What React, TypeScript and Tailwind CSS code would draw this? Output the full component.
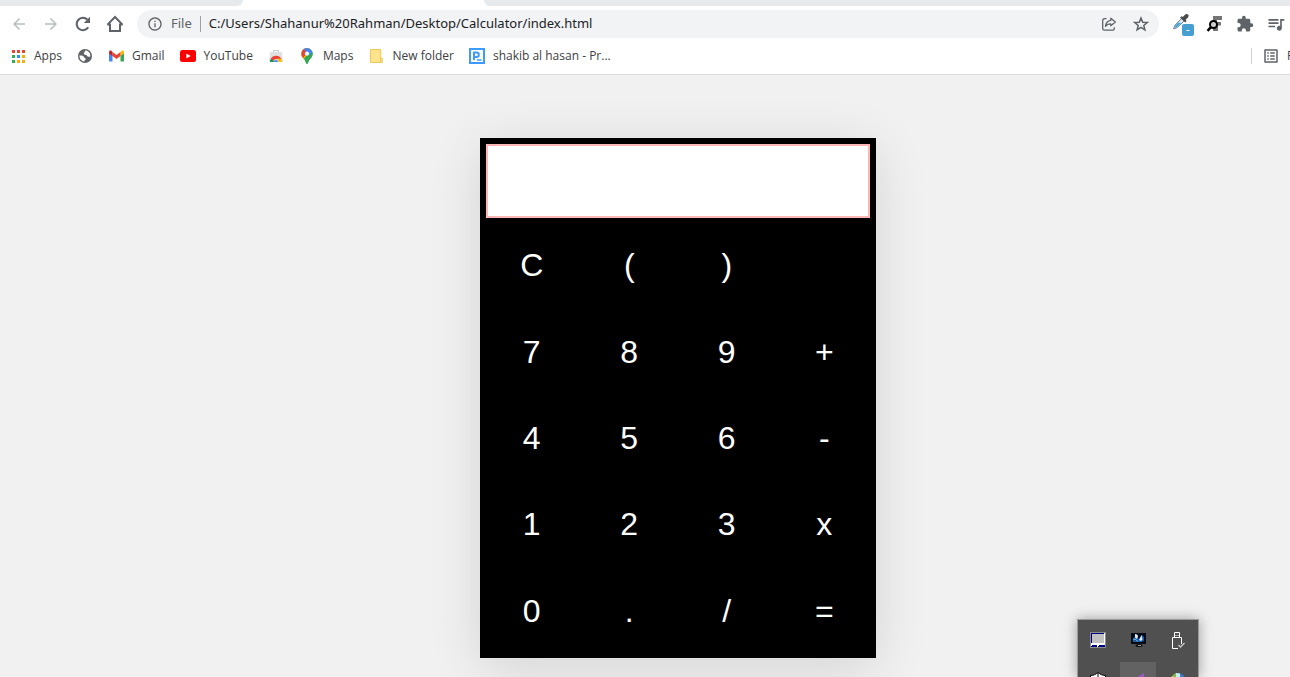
import { useState } from "react";
import type { ReactNode } from "react";
import {
  MdArrowBack,
  MdArrowForward,
  MdExtension,
  MdInfoOutline,
  MdOutlineListAlt,
  MdQueueMusic,
} from "react-icons/md";

const KEYS = [
  "C", "(", ")", "",
  "7", "8", "9", "+",
  "4", "5", "6", "-",
  "1", "2", "3", "x",
  "0", ".", "/", "=",
];

/* Recursive descent over + - x / and brackets. */
function evaluate(source: string): string {
  let pos = 0;
  const factor = (): number => {
    if (source[pos] === "-") {
      pos++;
      return -factor();
    }
    if (source[pos] === "(") {
      pos++;
      const inner = sum();
      pos++;
      return inner;
    }
    const start = pos;
    while (/[\d.]/.test(source[pos] ?? "")) pos++;
    return parseFloat(source.slice(start, pos));
  };
  const product = (): number => {
    let value = factor();
    while (source[pos] === "x" || source[pos] === "/") {
      value = source[pos++] === "x" ? value * factor() : value / factor();
    }
    return value;
  };
  const sum = (): number => {
    let value = product();
    while (source[pos] === "+" || source[pos] === "-") {
      value = source[pos++] === "+" ? value + product() : value - product();
    }
    return value;
  };
  const result = sum();
  return Number.isNaN(result) ? "Error" : String(result);
}

function ReloadIcon() {
  return (
    <svg viewBox="0 0 18 18" className="size-[18px]">
      <path d="M14.200 12.200A6.200 6.200 0 1 1 13.300 4.600" fill="none" stroke="#5f6368" strokeWidth="2.100" />
      <path d="M16 1.800V8H9.800Z" fill="#5f6368" />
    </svg>
  );
}

function HomeIcon() {
  return (
    <svg viewBox="0 0 18 18" className="size-[18px]" fill="none" stroke="#5f6368" strokeWidth="2">
      <path d="M1.500 9.600 9 2l7.500 7.600M4 8.500V16h10V8.500M1.200 9.500H4M14 9.500h2.800" />
    </svg>
  );
}

function ShareIcon() {
  return (
    <svg viewBox="0 0 16 16" className="size-4" fill="none" stroke="#5f6368" strokeWidth="1.300" strokeLinejoin="round">
      <path d="M5.500 2.700H3.300a1.600 1.600 0 0 0-1.600 1.600v8.200a1.600 1.600 0 0 0 1.600 1.600h8.400a1.600 1.600 0 0 0 1.600-1.600v-1.300" />
      <path d="M9.800 2.200 14.400 6 9.800 9.800V7.900c-2.500 0-4.200.7-5.300 2.500.3-3.200 2.100-5.600 5.300-6.100V2.200Z" />
    </svg>
  );
}

function StarIcon() {
  return (
    <svg viewBox="0 0 16 16" className="size-4" fill="none" stroke="#5f6368" strokeWidth="1.500">
      <path d="m8 2 1.700 4.200 4.500.3-3.400 2.900 1.100 4.400L8 11.400l-3.900 2.400 1.100-4.400-3.400-2.900 4.500-.3Z" />
    </svg>
  );
}

function GlobeIcon() {
  return (
    <svg viewBox="0 0 16 16" className="size-4 shrink-0">
      <circle cx="8" cy="8" r="7" fill="#5f6368" />
      <path d="M9.500 2.600c-1.600 0-2 .7-1.700 1.600-1.200.3-1.200 1.300-.6 2 .9.900 2.600.3 3.100 1.700.3 1 1.600 1 3 .6.300-2.600-1.200-5-3.800-5.900Z" fill="#fff" />
      <path d="M2.500 7.500c2.300-.2 4.400.2 4.600 1.800.1 1 1.600.4 1.600 1.700 0 1-1.200 1-1.300 2.400C4.600 13.200 2.300 11 2.500 7.500Z" fill="#fff" />
    </svg>
  );
}

function PipetteIcon() {
  return (
    <svg viewBox="0 0 22 24" className="h-6 w-[22px]">
      <path d="m1.500 16.800 1.300-3.500 7-7 2.500 2.500-7.200 6.900Z" fill="#dbe9f1" stroke="#7d868d" strokeWidth="1" />
      <path d="m2.500 15.800 1-2.300 2.600-2.700h3.200L5 15Z" fill="#35a7e0" />
      <path d="m8 5.500 1.500-1.300 1.200.8 2-2c1.200-1.200 2.600-1.300 3.400-.5s.7 2.100-.4 3.300l-2 2 .8 1.300-1.300 1.400Z" fill="#4a4a4c" />
      <rect x="10" y="12" width="12" height="12" rx="2" fill="#469fcf" />
      <path d="M14.500 18.500h3" stroke="#fff" strokeWidth="1" />
    </svg>
  );
}

function FontFinderIcon() {
  return (
    <svg viewBox="0 0 18 18" className="size-[18px]">
      <path d="M7 1h9v4h-5v2h4v3.500h-3V16H7Z" fill="#757575" />
      <circle cx="7.500" cy="9.500" r="3.500" fill="#d0d0d0" stroke="#000" strokeWidth="2" />
      <path d="m5 12.200-3.500 3.600" stroke="#000" strokeWidth="2.500" />
    </svg>
  );
}

function AppsIcon() {
  const dots = [
    "#ea4335", "#ea4335", "#ea4335",
    "#34a853", "#2196f3", "#fbab09",
    "#34a853", "#fbab09", "#fbab09",
  ];
  return (
    <svg viewBox="0 0 13 13" className="size-[13px]">
      {dots.map((fill, i) => (
        <rect key={i} x={(i % 3) * 5} y={Math.floor(i / 3) * 5} width="3" height="3" fill={fill} />
      ))}
    </svg>
  );
}

function GmailIcon() {
  return (
    <svg viewBox="0 0 15 12" className="h-3 w-[15px]">
      <path d="M0 3v7.500c0 .6.500 1 1 1h2.500V5Z" fill="#4285f4" />
      <path d="M15 3v7.500c0 .6-.5 1-1 1h-2.500V5Z" fill="#34a853" />
      <path d="M11.500 2v4L15 3.500V2c0-1.400-1.500-2-2.500-1Z" fill="#fbbc04" />
      <path d="M3.500 6V2l4 3 4-3v4l-4 3Z" fill="#ea4335" />
      <path d="M0 2v1.500L3.500 6V2l-1-1C1.500 0 0 .6 0 2Z" fill="#c5221f" />
    </svg>
  );
}

function YouTubeIcon() {
  return (
    <svg viewBox="0 0 16 12" className="h-3 w-4">
      <rect width="16" height="12" rx="2.500" fill="#f00" />
      <path d="M6.300 3.400 10.700 6 6.300 8.600Z" fill="#fff" />
    </svg>
  );
}

function WebStoreIcon() {
  return (
    <svg viewBox="0 0 14 14" className="size-3.5">
      <path d="M4.500 3V1.500h5V3" fill="none" stroke="#c9cccf" />
      <path d="M1 3h12l1 10H0Z" fill="#dfe1e3" />
      <path d="M1 13a6 6 0 0 1 2-4.500L5 13Z" fill="#0f9d58" />
      <path d="M1.800 9.800a6 6 0 0 1 10.600.200L7 10a2.600 2.600 0 0 0-2.500 2Z" fill="#ea4335" />
      <path d="M12.300 9.800c.5 1 .7 2 .7 3.200H9.500c0-1.200-.5-2.300-1.500-3.200Z" fill="#fbbc04" />
      <path d="M5 13a2 2 0 1 1 4 0Z" fill="#4285f4" />
    </svg>
  );
}

function MapsIcon() {
  return (
    <svg viewBox="0 0 12 16" className="h-4 w-3">
      <defs>
        <clipPath id="maps-pin">
          <path d="M6 0a5.600 5.600 0 0 0-5.600 5.700c0 3 1.700 4 3.300 6.300C4.800 13.500 5 16 6 16s1.200-2.500 2.300-4c1.600-2.300 3.300-3.300 3.300-6.300A5.600 5.600 0 0 0 6 0Z" />
        </clipPath>
      </defs>
      <g clipPath="url(#maps-pin)">
        <rect width="12" height="16" fill="#34a853" />
        <path d="M0 11V7l6-7h6L2.500 11Z" fill="#fbbc04" />
        <path d="M0 0h4l2 5-4 5-2-2Z" fill="#ea4335" />
        <path d="M3 0h9v4L8.500 8 5.500 5.500Z" fill="#4285f4" />
        <path d="M12 3v13H3.500v-3.500Z" fill="#34a853" />
      </g>
      <circle cx="6" cy="5.600" r="2.100" fill="#fff" />
    </svg>
  );
}

function FolderIcon() {
  return (
    <svg viewBox="0 0 13 15" className="h-[15px] w-[13px]">
      <path d="M.5.5h10.200V9h1.500v4.500h-11.700Z" fill="#ffe38d" stroke="#efc956" />
      <path d="M10.500 9v4.500" stroke="#efc956" />
    </svg>
  );
}

function PortalIcon() {
  return (
    <svg viewBox="0 0 16 16" className="size-4">
      <rect x="1" y="1" width="14" height="14" fill="#fff" stroke="#3d9bff" strokeWidth="2" />
      <path d="M5 12V4.500h2.500a2.300 2.300 0 0 1 0 4.600H5" fill="none" stroke="#3d9bff" strokeWidth="2" />
      <path d="M8 12h4.500" stroke="#3d9bff" strokeWidth="1.500" />
    </svg>
  );
}

function Bookmark({ icon, label, title }: { icon: ReactNode; label?: string; title?: string }) {
  return (
    <a href="#" aria-label={label ?? title} className="flex shrink-0 items-center gap-2 whitespace-nowrap">
      <span className="flex w-4 justify-center">{icon}</span>
      {label}
    </a>
  );
}

function BrowserChrome() {
  return (
    <header className="border-b border-[#d9dbdd] bg-white font-['Open_Sans',sans-serif] text-xs text-[#3c4043]">
      <div className="flex h-1.5">
        <div className="w-[243px] rounded-br-md bg-[#e6eaed]" />
        <div className="w-[241px]" />
        <div className="flex-1 rounded-bl-md bg-[#e6eaed]" />
      </div>
      <div className="flex h-9 items-center pl-2.5">
        <nav className="flex items-center gap-3.5 pr-[13px]">
          <button type="button" aria-label="Back"><MdArrowBack className="size-[18px] text-[#babcbe]" /></button>
          <button type="button" aria-label="Forward"><MdArrowForward className="size-[18px] text-[#babcbe]" /></button>
          <button type="button" aria-label="Reload"><ReloadIcon /></button>
          <button type="button" aria-label="Home"><HomeIcon /></button>
        </nav>
        <div className="flex h-7 flex-1 items-center rounded-full bg-[#f1f3f4] px-2.5 font-['Noto_Sans',sans-serif] text-[13px]">
          <MdInfoOutline className="size-4 text-[#5f6368]" />
          <span className="ml-2 text-[#5f6368]">File</span>
          <span className="mx-2 h-4 w-px bg-[#9aa0a6]" />
          <input
            aria-label="Address"
            readOnly
            value="C:/Users/Shahanur%20Rahman/Desktop/Calculator/index.html"
            className="min-w-0 flex-1 bg-transparent text-[#202124] outline-none"
          />
          <div className="flex items-center gap-4">
            <button type="button" aria-label="Share"><ShareIcon /></button>
            <button type="button" aria-label="Bookmark this page"><StarIcon /></button>
          </div>
        </div>
        <div className="flex items-center gap-3 pr-1 pl-[13px]">
          <button type="button" aria-label="Color picker"><PipetteIcon /></button>
          <button type="button" aria-label="Font finder"><FontFinderIcon /></button>
          <button type="button" aria-label="Extensions"><MdExtension className="size-[18px] text-[#5f6368]" /></button>
          <button type="button" aria-label="Media controls"><MdQueueMusic className="size-5 text-[#5f6368]" /></button>
        </div>
      </div>
      <div className="flex h-8 items-center pb-1 pl-2.5">
        <div className="flex items-center gap-[15px]">
          <Bookmark icon={<AppsIcon />} label="Apps" />
          <Bookmark icon={<GlobeIcon />} title="Website" />
          <Bookmark icon={<GmailIcon />} label="Gmail" />
          <Bookmark icon={<YouTubeIcon />} label="YouTube" />
          <Bookmark icon={<WebStoreIcon />} title="Web Store" />
          <Bookmark icon={<MapsIcon />} label="Maps" />
          <Bookmark icon={<FolderIcon />} label="New folder" />
          <Bookmark icon={<PortalIcon />} label="shakib al hasan - Pr..." />
        </div>
        <div className="ml-auto flex items-center">
          <span className="mr-2.5 h-4 w-px bg-[#cfd1d3]" />
          <MdOutlineListAlt className="size-[18px] text-[#5f6368]" />
          <span className="ml-[7px] w-[3px] overflow-hidden whitespace-nowrap">Reading list</span>
        </div>
      </div>
    </header>
  );
}

function Calculator() {
  const [value, setValue] = useState("");
  const press = (key: string) => {
    if (key === "C") setValue("");
    else if (key === "=") setValue(evaluate(value));
    else setValue(value + key);
  };
  return (
    <section className="flex min-h-[520px] w-[396px] flex-col bg-black px-[3px] py-1 font-['Liberation_Sans',sans-serif] text-[32px] shadow-[0_10px_50px_rgba(0,0,0,0.12)]">
      <input
        aria-label="Result"
        value={value}
        onChange={(e) => setValue(e.target.value)}
        className="mx-[3px] mt-0.5 mb-1 h-[74px] border-2 border-[#ffb6b6] bg-white px-2 text-black outline-none"
      />
      <div className="grid flex-1 grid-cols-4 grid-rows-5 text-white">
        {KEYS.map((key, i) =>
          key ? (
            <button key={i} type="button" onClick={() => press(key)}>
              {key}
            </button>
          ) : (
            <span key={i} />
          ),
        )}
      </div>
    </section>
  );
}

function TrayPopup() {
  return (
    <aside className="fixed right-[91px] bottom-0 grid h-[58px] w-[122px] auto-rows-[38px] grid-cols-3 gap-[3px] overflow-hidden border border-b-0 border-[#9b9b9b] bg-[#505050] px-0.5 pt-px shadow-[0_0_12px_rgba(0,0,0,0.35)]">
      <button type="button" aria-label="Touchpad" className="flex items-center justify-center">
        <svg viewBox="0 0 16 16" className="size-4" shapeRendering="crispEdges">
          <rect width="16" height="16" fill="#8c8c8c" />
          <rect x="1" y="1" width="14" height="14" fill="#fff" />
          <rect x="1" y="1" width="13" height="10" fill="#000080" />
          <rect x="2" y="2" width="12" height="9" fill="#c0c0c0" />
          <rect x="1" y="11" width="14" height="1" fill="#fff" />
          <path d="M2 13h5v2H1v-1h1ZM9 13h6v2H8v-1h1Z" fill="#000080" />
        </svg>
      </button>
      <button type="button" aria-label="Graphics" className="flex items-center justify-center">
        <svg viewBox="0 0 16 16" className="size-4">
          <rect x="1" y="1" width="15" height="11" fill="#050b16" />
          <path d="M3 10V6l3-2 3 3 3-4 2 2v4l-3 1H5Z" fill="#1c5a9c" />
          <path d="M5 2c2 0 3 1 3 2.500L7 7 5 5.500ZM9 8l2.500-5 1 4.500L11 9Z" fill="#dceaf7" />
          <path d="M3 8 5 7l3 2.500" fill="none" stroke="#6cb6ed" />
          <ellipse cx="9" cy="13.500" rx="3.500" ry="1.500" fill="#111" />
          <path d="M8 13.500h3" stroke="#999" />
        </svg>
      </button>
      <button type="button" aria-label="Safely remove hardware" className="flex items-center justify-center">
        <svg viewBox="0 0 14 17" className="h-[17px] w-3.5" fill="none" stroke="#fff">
          <path d="M3.500 5.500v-5h5v5M1.500 5.500h9v6.500M7 16.500H1.500v-11M4.500 3.500h1M6.500 3.500h1" />
          <path d="m7.500 13 2 2 4-4" stroke="#c9c9c9" strokeWidth="1.300" />
        </svg>
      </button>
      <button type="button" aria-label="Security" className="flex items-center justify-center">
        <svg viewBox="0 0 16 18" className="h-[18px] w-4">
          <path d="M.5 3.500c3 0 5-1 7.500-3 2.500 2 4.500 3 7.500 3V9c0 4-4 7-7.500 8.500C4.500 16 .5 13 .5 9Z" fill="#fff" stroke="#000" />
          <path d="M8 .5V17M1 9h14" stroke="#000" />
        </svg>
      </button>
      <button type="button" aria-label="Editor" className="flex items-center justify-center bg-[#626262]">
        <svg viewBox="0 0 16 16" className="size-4">
          <path d="M1 8 14 0v15Z" fill="#9b59c6" />
        </svg>
      </button>
      <button type="button" aria-label="Display color" className="flex items-center justify-center">
        <svg viewBox="0 0 16 16" className="size-4">
          <path d="M0 5 6 0v13H2Z" fill="#f2c230" />
          <path d="m3 2 4-2v13H4Z" fill="#78bd43" />
          <path d="M7 0c5 0 7 2 8 6l-4 7H7Z" fill="#3d78cf" />
          <path d="m6 0 4 .5V4H6Z" fill="#c9f0f4" />
        </svg>
      </button>
    </aside>
  );
}

export default function App() {
  return (
    <div className="flex h-screen flex-col overflow-hidden bg-[#f1f1f1]">
      <BrowserChrome />
      <main className="flex flex-1 items-start justify-center pt-[63px] pl-[66px]">
        <Calculator />
      </main>
      <TrayPopup />
    </div>
  );
}
